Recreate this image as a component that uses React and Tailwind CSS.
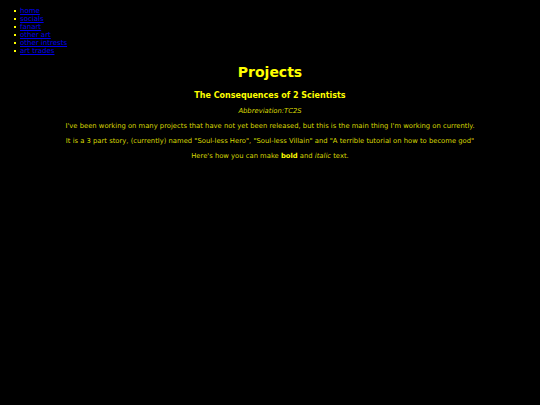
const links = ["home", "socials", "fanart", "other art", "other intrests", "art trades"];

export default function App() {
  return (
    <div className="min-h-[405px] bg-black px-[3px] py-[7px] font-['DejaVu_Sans',Verdana,sans-serif] text-[7px] leading-[normal] text-[#d8d800]">
      <ul className="pl-[11px]">
        {links.map((l) => (
          <li key={l} className="flex items-center">
            <span className="mr-[4px] h-[2px] w-[2px] bg-[#ffff00]" />
            <a href="#" className="text-[#0000ee] underline">
              {l}
            </a>
          </li>
        ))}
      </ul>

      <div className="mt-[9px] text-center text-[6.8px]">
        <h1 className="text-[14px] font-bold leading-[normal] text-[#ffff00]">Projects</h1>
        <h2 className="mt-[11px] text-[8px] font-bold leading-[normal] text-[#ffff00]">The Consequences of 2 Scientists</h2>
        <p className="mt-[7px] italic">Abbreviation:TC2S</p>
        <p className="mt-[7px]">
          I've been working on many projects that have not yet been released, but this is the main thing I'm working on currently.
        </p>
        <p className="mt-[7px]">
          It is a 3 part story, (currently) named "Soul-less Hero", "Soul-less Villain" and "A terrible tutorial on how to become god"
        </p>
        <p className="mt-[6.5px]">
          Here's how you can make <b className="text-[#ffff00]">bold</b> and <i>italic</i> text.
        </p>
      </div>
    </div>
  );
}
